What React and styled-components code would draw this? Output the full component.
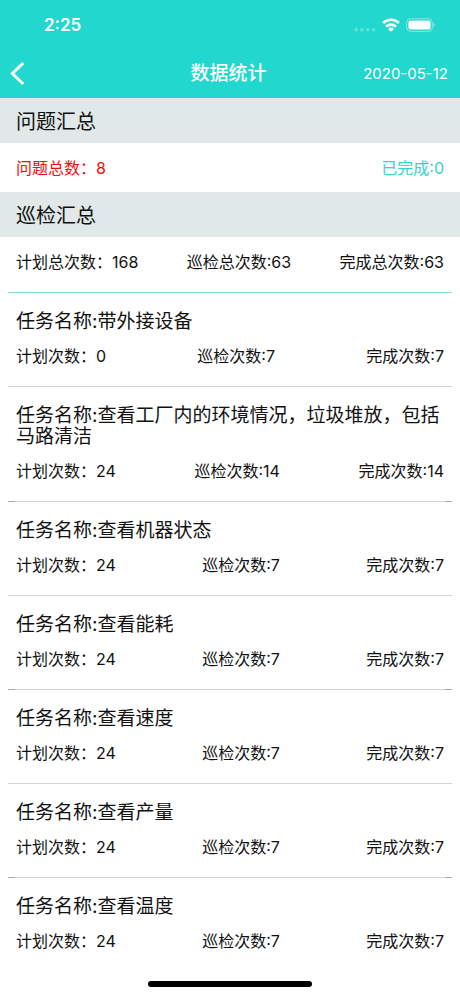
import React from 'react';
import styled, { createGlobalStyle } from 'styled-components';

const tasks = [
	{ name: '带外接设备', plan: 0, inspect: 7, done: 7 },
	{ name: '查看工厂内的环境情况，垃圾堆放，包括马路清洁', plan: 24, inspect: 14, done: 14 },
	{ name: '查看机器状态', plan: 24, inspect: 7, done: 7 },
	{ name: '查看能耗', plan: 24, inspect: 7, done: 7 },
	{ name: '查看速度', plan: 24, inspect: 7, done: 7 },
	{ name: '查看产量', plan: 24, inspect: 7, done: 7 },
	{ name: '查看温度', plan: 24, inspect: 7, done: 7 },
];

function StatusBar() {
	return (
		<StatusWrapper>
			<Clock>2:25</Clock>
			<StatusIcons>
				<svg width="22" height="16" viewBox="0 0 22 16" fill="#fff" opacity="0.25">
					<rect x="0.5" y="11" width="3.4" height="3.4" rx="0.8" />
					<rect x="6.3" y="11" width="3.4" height="3.4" rx="0.8" />
					<rect x="12.1" y="11" width="3.4" height="3.4" rx="0.8" />
					<rect x="17.9" y="11" width="3.4" height="3.4" rx="0.8" />
				</svg>
				<svg width="18" height="14" viewBox="0 0 18 14" fill="none" stroke="#fff" strokeWidth="2.6">
					<path d="M1.1 5a11.4 11.4 0 0 1 15.8 0" />
					<path d="M4.1 8.6a7.1 7.1 0 0 1 9.8 0" />
					<path d="M9 13.8 6 10.9a4.4 4.4 0 0 1 6 0Z" fill="#fff" stroke="none" />
				</svg>
				<svg width="30" height="14" viewBox="0 0 30 14">
					<rect x="0.7" y="0.7" width="25.6" height="12.6" rx="3.8" fill="none" stroke="#fff" strokeOpacity="0.45" />
					<rect x="2.4" y="2.4" width="22.2" height="9.2" rx="2.3" fill="#fff" />
					<path d="M27.5 4.8c1.8.7 1.8 3.7 0 4.4Z" fill="#fff" fillOpacity="0.5" />
				</svg>
			</StatusIcons>
		</StatusWrapper>
	);
}

function App() {
	return (
		<Page>
			<GlobalStyle />
			<Header>
				<StatusBar />
				<NavBar>
					<BackButton type="button" aria-label="返回">
						<svg width="16" height="24" viewBox="0 0 16 24" fill="none" stroke="#fff" strokeWidth="3">
							<path d="M14.2 1 3.4 11.5 14.2 22" />
						</svg>
					</BackButton>
					<NavTitle>数据统计</NavTitle>
					<NavDate>2020-05-12</NavDate>
				</NavBar>
			</Header>
			<main>
				<SectionTitle>问题汇总</SectionTitle>
				<IssueRow>
					<Count $color="#f00f0b">问题总数：8</Count>
					<Count $color="#35d3ca">已完成:0</Count>
				</IssueRow>
				<SectionTitle>巡检汇总</SectionTitle>
				<TotalBox>
					<CountRow>
						<Count>计划总次数：168</Count>
						<Count>巡检总次数:63</Count>
						<Count>完成总次数:63</Count>
					</CountRow>
				</TotalBox>
				<TaskList>
					{tasks.map((task) => (
						<TaskItem key={task.name}>
							<TaskName>任务名称:{task.name}</TaskName>
							<CountRow>
								<Count>计划次数：{task.plan}</Count>
								<Count>巡检次数:{task.inspect}</Count>
								<Count>完成次数:{task.done}</Count>
							</CountRow>
						</TaskItem>
					))}
				</TaskList>
			</main>
			<HomeIndicator />
		</Page>
	);
}

const GlobalStyle = createGlobalStyle`
	* {
		box-sizing: border-box;
		margin: 0;
		padding: 0;
	}
	body {
		background-color: #fff;
		color: #111;
		font-family: Inter, 'Noto Sans CJK SC', sans-serif;
	}
`;

const Page = styled.div`
	min-height: 100vh;
`;

const Header = styled.header`
	background-color: #22d7cd;
	color: #fff;
`;

const StatusWrapper = styled.div`
	display: flex;
	justify-content: space-between;
	align-items: center;
	height: 50px;
	padding: 0 24px 0 44px;
`;

const Clock = styled.span`
	font-size: 17px;
	font-weight: 600;
	line-height: 20px;
`;

const StatusIcons = styled.div`
	display: flex;
	align-items: center;
	gap: 6px;
`;

const NavBar = styled.div`
	display: grid;
	grid-template-columns: 1fr auto 1fr;
	align-items: center;
	height: 48px;
	padding: 0 12px 0 9px;
`;

const BackButton = styled.button`
	display: flex;
	justify-self: start;
	border: none;
	background: none;
	cursor: pointer;
`;

const NavTitle = styled.h1`
	font-size: 19px;
	font-weight: 500;
	line-height: 24px;
`;

const NavDate = styled.span`
	justify-self: end;
	font-size: 15px;
	line-height: 20px;
`;

const SectionTitle = styled.h2`
	padding: 12px 16px 9px;
	background-color: #e0e8e8;
	font-size: 20px;
	font-weight: 400;
	line-height: 24px;
`;

const IssueRow = styled.div`
	display: flex;
	justify-content: space-between;
	padding: 15px 16px 14px;
`;

const CountRow = styled.div`
	display: flex;
	justify-content: space-between;
`;

const Count = styled.span`
	color: ${({ $color }) => $color || 'inherit'};
	font-size: 16px;
	line-height: 20px;
`;

const TotalBox = styled.div`
	margin: 0 8px;
	padding: 15px 8px 20px;
	border-bottom: 1px solid #7fe3dc;
`;

const TaskList = styled.ul`
	margin: 0 8px;
	list-style: none;
`;

const TaskItem = styled.li`
	padding: 18px 8px 20px;
	border-bottom: 1px solid #d4d4d4;
	&:nth-child(even) {
		border-image: linear-gradient(to right, #a8a8a8 8px, #d4d4d4 8px calc(100% - 8px), #a8a8a8 calc(100% - 8px)) 1;
	}
	&:last-child {
		border-bottom: none;
	}
`;

const TaskName = styled.h3`
	margin-bottom: 14px;
	font-size: 19px;
	font-weight: 400;
	line-height: 21px;
`;

const HomeIndicator = styled.div`
	position: fixed;
	bottom: 9px;
	left: 50%;
	width: 164px;
	height: 6px;
	border-radius: 3px;
	background-color: #000;
	transform: translateX(-50%);
`;

export default App;
